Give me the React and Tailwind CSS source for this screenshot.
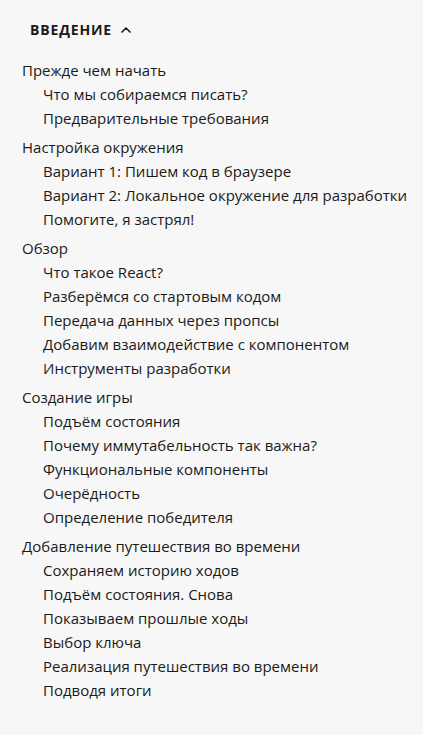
import { ChevronUp } from 'lucide-react'

const sections = [
  {
    title: 'Прежде чем начать',
    items: ['Что мы собираемся писать?', 'Предварительные требования'],
  },
  {
    title: 'Настройка окружения',
    items: [
      'Вариант 1: Пишем код в браузере',
      'Вариант 2: Локальное окружение для разработки',
      'Помогите, я застрял!',
    ],
  },
  {
    title: 'Обзор',
    items: [
      'Что такое React?',
      'Разберёмся со стартовым кодом',
      'Передача данных через пропсы',
      'Добавим взаимодействие с компонентом',
      'Инструменты разработки',
    ],
  },
  {
    title: 'Создание игры',
    items: [
      'Подъём состояния',
      'Почему иммутабельность так важна?',
      'Функциональные компоненты',
      'Очерёдность',
      'Определение победителя',
    ],
  },
  {
    title: 'Добавление путешествия во времени',
    items: [
      'Сохраняем историю ходов',
      'Подъём состояния. Снова',
      'Показываем прошлые ходы',
      'Выбор ключа',
      'Реализация путешествия во времени',
      'Подводя итоги',
    ],
  },
]

export default function App() {
  return (
    <div className="min-h-[735px] w-full bg-[#f7f7f7] text-[#1a1a1a] font-['Open_Sans',sans-serif]">
      <div className="px-[30px] pt-[19px]">
        <button className="flex items-center gap-[6px] text-[14px] font-bold uppercase tracking-[0.06em] text-[#1a1a1a]">
          Введение
          <ChevronUp size={16} strokeWidth={2.5} />
        </button>
      </div>
      <ul className="mt-[18px] pl-[22px] flex flex-col gap-[5px]">
        {sections.map((s) => (
          <li key={s.title}>
            <a className="block text-[15px] leading-[24px]">{s.title}</a>
            <ul className="pl-[21px]">
              {s.items.map((it) => (
                <li key={it}>
                  <a className="block text-[15px] leading-[24px]">{it}</a>
                </li>
              ))}
            </ul>
          </li>
        ))}
      </ul>
    </div>
  )
}
